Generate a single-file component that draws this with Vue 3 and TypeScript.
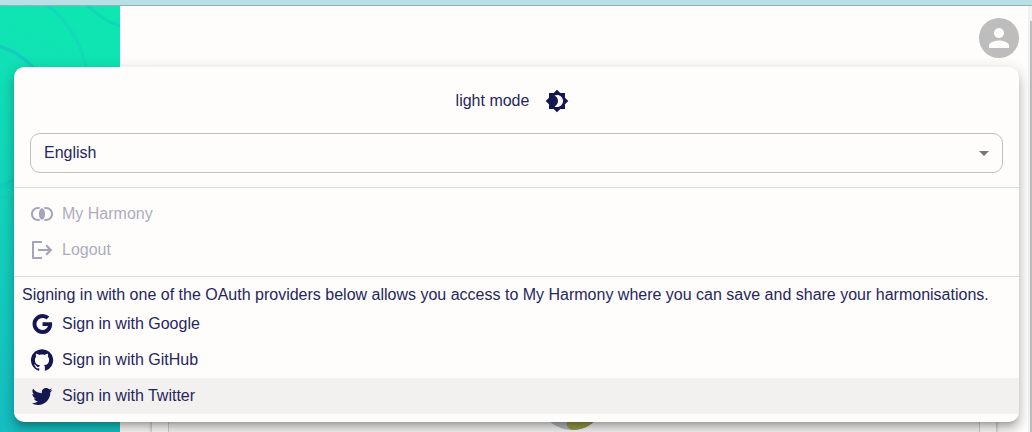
<script setup lang="ts">
import { ref } from 'vue'

interface Action {
  label: string
  icon: string
  disabled?: boolean
}

const language = ref('English')
const active = ref('Sign in with Twitter')

const account: Action[] = [
  {
    label: 'My Harmony',
    disabled: true,
    icon: 'M12 6.26c1.66 0 3 2.57 3 5.74s-1.34 5.74-3 5.74-3-2.57-3-5.74 1.34-5.74 3-5.74zM9.04 16.87c-.33.08-.68.13-1.04.13-2.76 0-5-2.24-5-5s2.24-5 5-5c.36 0 .71.05 1.04.13.39-.56.88-1.12 1.49-1.63C9.75 5.19 8.9 5 8 5c-3.86 0-7 3.14-7 7s3.14 7 7 7c.9 0 1.75-.19 2.53-.5-.61-.51-1.1-1.07-1.49-1.63zM16 5c-.9 0-1.75.19-2.53.5.61.51 1.1 1.07 1.49 1.63.33-.08.68-.13 1.04-.13 2.76 0 5 2.24 5 5s-2.24 5-5 5c-.36 0-.71-.05-1.04-.13-.39.56-.88 1.12-1.49 1.63.78.31 1.63.5 2.53.5 3.86 0 7-3.14 7-7s-3.14-7-7-7z',
  },
  {
    label: 'Logout',
    disabled: true,
    icon: 'M3 3h9v2H4v14h8v2H3c-.6 0-1-.4-1-1V4c0-.6.4-1 1-1zM17 6.6l-1.5 1.5 2.7 2.8H8v2.2h10.2l-2.7 2.8 1.5 1.5 5.2-5.4z',
  },
]

const providers: Action[] = [
  {
    label: 'Sign in with Google',
    icon: 'M12.545 10.239v3.821h5.445c-.712 2.315-2.647 3.972-5.445 3.972a6.033 6.033 0 1 1 0-12.064c1.498 0 2.866.549 3.921 1.453l2.814-2.814A9.969 9.969 0 0 0 12.545 2C7.021 2 2.543 6.477 2.543 12s4.478 10 10.002 10c8.396 0 10.249-7.85 9.426-11.748l-9.426-.013z',
  },
  {
    label: 'Sign in with GitHub',
    icon: 'M12 1.27a11 11 0 0 0-3.48 21.46c.55.09.73-.28.73-.55v-1.84c-3.03.64-3.67-1.46-3.67-1.46-.55-1.29-1.28-1.65-1.28-1.65-.92-.65.1-.65.1-.65 1.1 0 1.73 1.1 1.73 1.1.92 1.65 2.57 1.2 3.21.92a2 2 0 0 1 .64-1.47c-2.47-.27-5.04-1.19-5.04-5.5 0-1.1.46-2.1 1.2-2.84a3.76 3.76 0 0 1 0-2.93s.91-.28 3.11 1.1c1.8-.49 3.7-.49 5.5 0 2.1-1.38 3.02-1.1 3.02-1.1a3.76 3.76 0 0 1 .1 2.93c.83.74 1.2 1.74 1.2 2.94 0 4.21-2.57 5.13-5.04 5.4.45.37.82.92.82 2.02v3.03c0 .27.1.64.73.55A11 11 0 0 0 12 1.27',
  },
  {
    label: 'Sign in with Twitter',
    icon: 'M22.46 6c-.77.35-1.6.58-2.46.69.88-.53 1.56-1.37 1.88-2.38-.83.5-1.75.85-2.72 1.05C18.37 4.5 17.26 4 16 4c-2.35 0-4.27 1.92-4.27 4.29 0 .34.04.67.11.98C8.28 9.09 5.11 7.38 3 4.79c-.37.63-.58 1.37-.58 2.15 0 1.49.75 2.81 1.91 3.56-.71 0-1.37-.2-1.95-.5v.03c0 2.08 1.48 3.82 3.44 4.21a4.22 4.22 0 0 1-1.93.07 4.28 4.28 0 0 0 4 2.98 8.521 8.521 0 0 1-5.33 1.84c-.34 0-.68-.02-1.02-.06C3.44 20.29 5.7 21 8.12 21 16 21 20.33 14.46 20.33 8.79c0-.19 0-.37-.01-.56.84-.6 1.56-1.36 2.14-2.23z',
  },
]
</script>

<template>
  <div class="page">
    <div class="strip"></div>
    <div class="body">
      <aside class="hero">
        <svg class="rings" viewBox="0 0 120 426" preserveAspectRatio="xMinYMin slice" aria-hidden="true">
          <circle cx="-20" cy="110" r="72" stroke-width="3" />
          <circle cx="-14" cy="81" r="102" stroke-width="3" opacity=".4" />
          <circle cx="145" cy="-55" r="79" stroke-width="3" opacity=".6" />
          <circle cx="-12" cy="264" r="75" stroke-width="2" opacity=".6" />
        </svg>
      </aside>
      <main class="main">
        <header class="topbar">
          <button class="avatar" type="button" aria-label="Account">
            <svg viewBox="0 0 24 24" aria-hidden="true">
              <path d="M12 12c2.21 0 4-1.79 4-4s-1.79-4-4-4-4 1.79-4 4 1.79 4 4 4zm0 2c-2.67 0-8 1.34-8 4v2h16v-2c0-2.66-5.33-4-8-4z" />
            </svg>
          </button>
        </header>
        <section class="card">
          <div class="panel">
            <svg class="venn" viewBox="0 0 60 40" aria-hidden="true">
              <ellipse cx="28" cy="18" rx="28" ry="22" fill="#b9bcbe" />
              <path d="M28 40C22 38 22 33 24 28L30 12h28c0 16-12 28-30 28z" fill="#979c48" />
            </svg>
          </div>
        </section>
      </main>
      <div class="track"><div class="thumb"></div></div>
    </div>

    <div class="menu">
      <div class="mode">
        <label for="mode">light mode</label>
        <button id="mode" class="toggle" type="button">
          <svg class="icon" viewBox="0 0 24 24" aria-hidden="true">
            <path d="M20 8.69V4h-4.69L12 .69 8.69 4H4v4.69L.69 12 4 15.31V20h4.69L12 23.31 15.31 20H20v-4.69L23.31 12 20 8.69zM12 18c-.89 0-1.74-.2-2.5-.55C11.56 16.5 13 14.42 13 12s-1.44-4.5-3.5-5.45C10.26 6.2 11.11 6 12 6c3.31 0 6 2.69 6 6s-2.69 6-6 6z" />
          </svg>
        </button>
      </div>
      <div class="field">
        <select v-model="language" aria-label="Language">
          <option>English</option>
        </select>
        <svg class="icon caret" viewBox="0 0 24 24" aria-hidden="true"><path d="M7 10l5 5 5-5z" /></svg>
      </div>
      <div class="group account">
        <button v-for="a in account" :key="a.label" class="item" type="button" :disabled="a.disabled">
          <svg class="icon" viewBox="0 0 24 24" aria-hidden="true"><path :d="a.icon" /></svg>
          <span>{{ a.label }}</span>
        </button>
      </div>
      <div class="group providers">
        <p>Signing in with one of the OAuth providers below allows you access to My Harmony where you can save and share your harmonisations.</p>
        <button
          v-for="p in providers"
          :key="p.label"
          class="item"
          :class="{ active: p.label === active }"
          type="button"
          @mouseenter="active = p.label"
        >
          <svg class="icon" viewBox="0 0 24 24" aria-hidden="true"><path :d="p.icon" /></svg>
          <span>{{ p.label }}</span>
        </button>
      </div>
    </div>
  </div>
</template>

<style>
body {
  margin: 0;
}
</style>

<style scoped>
.page {
  position: relative;
  display: flex;
  flex-direction: column;
  min-height: 100vh;
  overflow: hidden;
  box-sizing: border-box;
  background: #fefdfb;
  color: #26265f;
  font: 400 16px/24px "Liberation Sans", Arial, sans-serif;
}
.strip {
  height: 5px;
  background: #b8e1e5;
  border-bottom: 1px solid #8fb3b8;
}
.body {
  flex: 1;
  display: flex;
}
.hero {
  width: 120px;
  flex: none;
  display: flex;
  background: linear-gradient(205deg, #0de7b1 0%, #10e2b4 20%, #14cdbd 65%, #16bdc2 100%);
}
.rings {
  width: 100%;
  fill: none;
  stroke: #14cbbd;
}
.main {
  flex: 1;
  display: flex;
  flex-direction: column;
}
.topbar {
  display: flex;
  justify-content: flex-end;
  padding: 12px 9px;
}
.avatar {
  display: flex;
  align-items: center;
  justify-content: center;
  width: 40px;
  height: 40px;
  padding: 0;
  border: 0;
  border-radius: 50%;
  background: #bdbdbd;
}
.avatar svg {
  width: 30px;
  height: 30px;
  fill: #fefdfb;
}
.card {
  flex: 1;
  display: flex;
  margin: 0 32px;
  padding: 0 16px;
  background: #fefdfb;
  box-shadow: 0 1px 4px rgba(0, 0, 0, 0.4);
}
.panel {
  flex: 1;
  display: flex;
  align-items: flex-end;
  justify-content: center;
  padding-bottom: 2px;
  border: 1px solid #d0d0d0;
  border-width: 0 1px;
  background: #f8f7f8;
}
.venn {
  width: 60px;
  height: 40px;
}
.track {
  width: 2px;
  padding: 15px 0 0 2px;
  background: #f1f1f1;
  display: flex;
}
.thumb {
  flex: 1;
  background: #bdbdbd;
}
.menu {
  position: absolute;
  top: 67px;
  left: 14px;
  right: 13px;
  padding-bottom: 8px;
  border-radius: 10px;
  background: #fefdfb;
  box-shadow: 0 5px 5px -3px rgba(0, 0, 0, 0.2), 0 8px 10px 1px rgba(0, 0, 0, 0.14), 0 3px 14px 2px rgba(0, 0, 0, 0.12);
}
.mode {
  display: flex;
  align-items: center;
  justify-content: center;
  gap: 8px;
  padding: 14px 0 12px;
}
.toggle {
  display: flex;
  padding: 8px;
  border: 0;
  background: none;
  color: inherit;
}
.icon {
  width: 24px;
  height: 24px;
  flex: none;
  fill: #141752;
}
.field {
  display: flex;
  align-items: center;
  margin: 0 16px 14px;
}
select {
  flex: 1;
  height: 40px;
  padding: 0 32px 0 13px;
  border: 1px solid #c0c0c0;
  border-radius: 10px;
  background: none;
  color: inherit;
  font: inherit;
  appearance: none;
}
.caret {
  margin-left: -31px;
  margin-right: 7px;
  fill: #757575;
  pointer-events: none;
}
.group {
  border-top: 1px solid #dddcdb;
}
.account {
  padding: 8px 0;
}
.providers {
  padding-top: 7px;
}
.group p {
  margin: 0;
  padding: 0 8px;
  line-height: 22px;
}
.item {
  display: flex;
  align-items: center;
  gap: 8px;
  width: 100%;
  padding: 6px 16px;
  border: 0;
  background: none;
  color: inherit;
  font: inherit;
  text-align: left;
}
.item:disabled {
  opacity: 0.38;
}
.item.active {
  background: #f2f1f0;
}
</style>
